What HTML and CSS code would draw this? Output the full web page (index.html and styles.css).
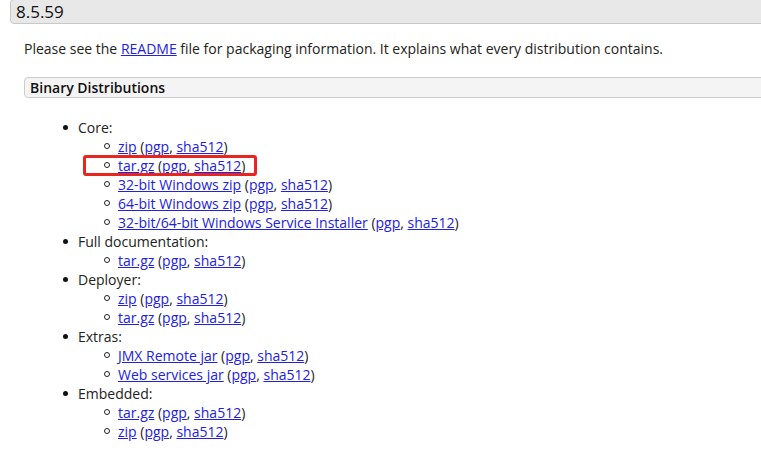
FILE: index.html
```html
<!DOCTYPE html>
<html>
<head>
<meta charset="utf-8">
<link rel="stylesheet" href="styles.css">
</head>
<body>
<div class="page">
  <h3 class="version">8.5.59</h3>
  <div class="body">
    <p class="intro">Please see the <a href="#">README</a> file for packaging information. It explains what every distribution contains.</p>
    <h4 class="section">Binary Distributions</h4>
    <ul class="outer">
      <li>Core:
        <ul class="inner">
          <li><a href="#">zip</a> (<a href="#">pgp</a>, <a href="#">sha512</a>)</li>
          <li class="marked"><a href="#">tar.gz</a> (<a href="#">pgp</a>, <a href="#">sha512</a>)<span class="annot"></span></li>
          <li><a href="#">32-bit Windows zip</a> (<a href="#">pgp</a>, <a href="#">sha512</a>)</li>
          <li><a href="#">64-bit Windows zip</a> (<a href="#">pgp</a>, <a href="#">sha512</a>)</li>
          <li><a href="#">32-bit/64-bit Windows Service Installer</a> (<a href="#">pgp</a>, <a href="#">sha512</a>)</li>
        </ul>
      </li>
      <li>Full documentation:
        <ul class="inner">
          <li><a href="#">tar.gz</a> (<a href="#">pgp</a>, <a href="#">sha512</a>)</li>
        </ul>
      </li>
      <li>Deployer:
        <ul class="inner">
          <li><a href="#">zip</a> (<a href="#">pgp</a>, <a href="#">sha512</a>)</li>
          <li><a href="#">tar.gz</a> (<a href="#">pgp</a>, <a href="#">sha512</a>)</li>
        </ul>
      </li>
      <li>Extras:
        <ul class="inner">
          <li><a href="#">JMX Remote jar</a> (<a href="#">pgp</a>, <a href="#">sha512</a>)</li>
          <li><a href="#">Web services jar</a> (<a href="#">pgp</a>, <a href="#">sha512</a>)</li>
        </ul>
      </li>
      <li>Embedded:
        <ul class="inner">
          <li><a href="#">tar.gz</a> (<a href="#">pgp</a>, <a href="#">sha512</a>)</li>
          <li><a href="#">zip</a> (<a href="#">pgp</a>, <a href="#">sha512</a>)</li>
        </ul>
      </li>
    </ul>
  </div>
</div>
</body>
</html>
```
FILE: styles.css
```css
html, body {
  margin: 0;
  padding: 0;
  background: #ffffff;
  overflow: hidden;
}
body {
  font-family: "Open Sans", "Noto Sans", "DejaVu Sans", sans-serif;
  font-size: 14px;
  line-height: 19px;
  color: #222222;
}
.page {
  padding-left: 10px;
}
.version {
  margin: -1px -20px 0 0;
  height: 23px;
  padding: 0 5px;
  background: #e8e8e8;
  border: 1px solid #c8c8c8;
  border-radius: 4px;
  font-size: 17px;
  font-weight: 500;
  line-height: 23px;
  color: #111111;
}
.body {
  padding-left: 14px;
}
.intro {
  margin: 15px 0 0 0;
}
.section {
  margin: 19px -20px 0 0;
  height: 19px;
  padding: 0 5px;
  background: #f4f4f4;
  border: 1px solid #cccccc;
  border-radius: 4px;
  font-size: 14px;
  font-weight: 600;
  line-height: 19px;
  color: #111111;
}
a {
  color: #2121e6;
  text-decoration: underline;
}
ul {
  margin: 0;
  list-style: none;
}
.outer {
  margin-top: 20px;
  padding-left: 54px;
}
.outer > li {
  position: relative;
}
.outer > li::before {
  content: "";
  position: absolute;
  left: -15px;
  top: 7px;
  width: 5px;
  height: 5px;
  border-radius: 50%;
  background: #111111;
}
.inner {
  padding-left: 40px;
}
.inner > li {
  position: relative;
}
.inner > li::before {
  content: "";
  position: absolute;
  left: -14px;
  top: 6px;
  width: 4px;
  height: 4px;
  border-radius: 50%;
  border: 1px solid #222222;
}
.annot {
  position: absolute;
  left: -35px;
  top: -1px;
  width: 168px;
  height: 15px;
  border: 3px solid #e8261e;
  border-radius: 3px;
}
```
